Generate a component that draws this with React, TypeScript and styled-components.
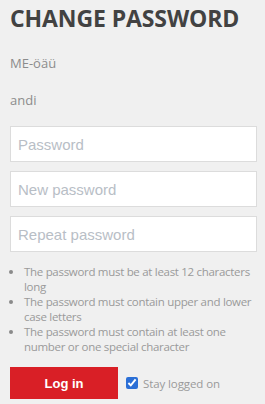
import styled, { createGlobalStyle } from "styled-components";

const GlobalStyle = createGlobalStyle`
  html, body {
    margin: 0;
    padding: 0;
    background-color: #f0f0f0;
  }
  body {
    font-family: "Open Sans", "Liberation Sans", sans-serif;
  }
`;

const Page = styled.div`
  padding: 3px 4px 0 10px;
  display: flex;
  flex-direction: column;
`;

const Title = styled.h1`
  margin: 0;
  font-size: 23px;
  line-height: 30px;
  font-weight: 700;
  color: #424242;
  letter-spacing: -0.1px;
`;

const InfoLine = styled.div<{ $gap: number }>`
  font-size: 13px;
  line-height: 18px;
  color: #8c8c8c;
  margin-top: ${(props) => props.$gap}px;
`;

const Form = styled.form`
  display: flex;
  flex-direction: column;
  gap: 9px;
  margin-top: 17px;
`;

const Field = styled.input`
  box-sizing: border-box;
  width: 247px;
  height: 36px;
  border: 1px solid #dcdcdc;
  background: #fff;
  padding: 0 7px;
  font-family: "Liberation Sans", Arial, sans-serif;
  font-size: 15px;
  color: #333;
  outline: none;

  &::placeholder {
    color: #b8bec6;
  }
`;

const Rules = styled.ul`
  margin: 12px 0 0;
  padding: 0 0 0 14px;
  font-size: 11.5px;
  line-height: 15px;
  letter-spacing: -0.3px;
  color: #9a9a9a;

  li::marker {
    color: #8a8a8a;
    font-size: 11px;
  }
`;

const Footer = styled.div`
  display: flex;
  align-items: center;
  gap: 8px;
  margin-top: 13px;
`;

const LoginButton = styled.button`
  width: 108px;
  height: 32px;
  border: none;
  background: #d91f26;
  color: #fff;
  font-family: "Liberation Sans", Arial, sans-serif;
  font-weight: 700;
  font-size: 13px;
  cursor: pointer;
`;

const Stay = styled.label`
  display: flex;
  align-items: center;
  gap: 5px;
  font-size: 11.5px;
  letter-spacing: -0.1px;
  color: #9a9a9a;
`;

const Check = styled.input`
  margin: 0;
  width: 12px;
  height: 12px;
  accent-color: #2b6fd6;
`;

export default function App() {
  return (
    <>
      <GlobalStyle />
      <Page>
        <Title>CHANGE PASSWORD</Title>
        <InfoLine $gap={21}>ME-öäü</InfoLine>
        <InfoLine $gap={19}>andi</InfoLine>
        <Form onSubmit={(e) => e.preventDefault()}>
          <Field type="password" placeholder="Password" />
          <Field type="password" placeholder="New password" />
          <Field type="password" placeholder="Repeat password" />
        </Form>
        <Rules>
          <li>The password must be at least 12 characters long</li>
          <li>The password must contain upper and lower case letters</li>
          <li>The password must contain at least one number or one special character</li>
        </Rules>
        <Footer>
          <LoginButton type="button">Log in</LoginButton>
          <Stay>
            <Check type="checkbox" defaultChecked />
            Stay logged on
          </Stay>
        </Footer>
      </Page>
    </>
  );
}
